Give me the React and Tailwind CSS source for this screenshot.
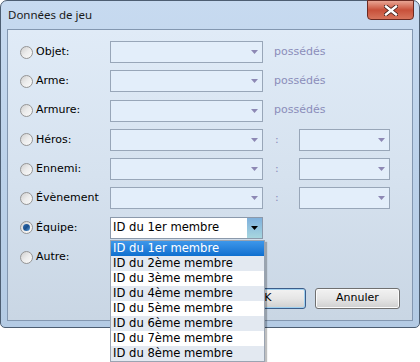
import React, { useState } from "react";

const rows = [
  { label: "Objet:", suffix: "possédés" },
  { label: "Arme:", suffix: "possédés" },
  { label: "Armure:", suffix: "possédés" },
  { label: "Héros:", second: true },
  { label: "Ennemi:", second: true },
  { label: "Évènement", second: true },
];

const members = [
  "ID du 1er membre",
  "ID du 2ème membre",
  "ID du 3ème membre",
  "ID du 4ème membre",
  "ID du 5ème membre",
  "ID du 6ème membre",
  "ID du 7ème membre",
  "ID du 8ème membre",
];

function Radio({ checked }) {
  return (
    <span className="w-[13px] h-[13px] rounded-full border border-[#959595] bg-gradient-to-br from-[#cfcfcf] via-[#ececec] to-[#fafafa] flex items-center justify-center shrink-0">
      {checked && (
        <span className="w-[7px] h-[7px] rounded-full bg-gradient-to-br from-[#2e6fb4] via-[#1b4f8c] to-[#5aa0dc]"></span>
      )}
    </span>
  );
}

function DisabledCombo({ width }) {
  return (
    <div
      className={`${width} h-[22px] border border-[#98a6b8] bg-[#e3eefa] flex items-center justify-end pr-[4px]`}
    >
      <svg width="7" height="4" viewBox="0 0 7 4">
        <path d="M0 0h7L3.5 4z" fill="#8d88b4" />
      </svg>
    </div>
  );
}

export default function App() {
  const [selected, setSelected] = useState(0);

  return (
    <div className="w-[420px] h-[362px] bg-white font-['DejaVu_Sans',sans-serif] text-[11px] text-black">
      {/* Window */}
      <div className="relative h-[328px] rounded-t-[7px] rounded-b-[5px] border border-[#4d5e72] bg-gradient-to-b from-[#c7daf0] via-[#bcd2ea] to-[#b4cbe4] px-[6px] pb-[6px] flex flex-col">
        {/* Title bar */}
        <div className="h-[28px] flex justify-between">
          <span className="pl-[1px] pt-[5px] font-['Noto_Sans',sans-serif] text-[11.5px] text-[#1a1a1a]">
            Données de jeu
          </span>
          <button className="-mt-px -mr-px w-[47px] h-[20px] rounded-b-[4px] border border-[#6b2a22] bg-gradient-to-b from-[#e8a493] via-[#c8503a] to-[#d7745c] flex items-center justify-center">
            <svg width="14" height="11" viewBox="0 0 14 11">
              <path
                d="M2 1.5l10 8M12 1.5l-10 8"
                stroke="#3b1a16"
                strokeWidth="4"
                strokeLinecap="square"
              />
              <path
                d="M2 1.5l10 8M12 1.5l-10 8"
                stroke="#ffffff"
                strokeWidth="2.4"
                strokeLinecap="square"
              />
            </svg>
          </button>
        </div>

        {/* Client area */}
        <div className="relative flex-1 border border-[#8397b0] bg-gradient-to-b from-[#e0ebf7] via-[#d6e2ef] to-[#c9d6e4] pt-[11px] pl-[12px] pr-[12px] flex flex-col">
          <div className="flex flex-col gap-[7.3px]">
            {rows.map((row) => (
              <div key={row.label} className="h-[22px] flex items-center">
                <div className="w-[90px] flex items-center gap-[3px]">
                  <Radio />
                  <span>{row.label}</span>
                </div>
                <DisabledCombo width="w-[153px]" />
                {row.suffix && (
                  <span className="ml-[11px] text-[#8b8dba]">{row.suffix}</span>
                )}
                {row.second && (
                  <>
                    <span className="ml-[12px] w-[24px] text-[#8b8dba]">:</span>
                    <DisabledCombo width="w-[91px]" />
                  </>
                )}
              </div>
            ))}

            {/* Équipe */}
            <div className="h-[22px] flex items-center">
              <div className="w-[90px] flex items-center gap-[3px]">
                <Radio checked />
                <span>Équipe:</span>
              </div>
              <div className="relative">
                <div className="w-[153px] h-[22px] border border-[#8b99ab] bg-white flex items-center text-[11.6px]">
                  <span className="flex-1 pl-[2px]">{members[selected]}</span>
                  <span className="w-[15px] h-[20px] bg-gradient-to-b from-[#7fb0dc] to-[#a7d6df] flex items-center justify-center">
                    <svg width="7" height="4" viewBox="0 0 7 4">
                      <path d="M0 0h7L3.5 4z" fill="#000000" />
                    </svg>
                  </span>
                </div>
                {/* Dropdown list */}
                <ul className="absolute left-0 top-[23px] w-[155px] border border-[#9aa4b2] bg-white shadow-[2px_2px_1px_rgba(0,0,0,0.25)] z-10 text-[11.6px]">
                  {members.map((m, i) => (
                    <li
                      key={m}
                      onClick={() => setSelected(i)}
                      className={`h-[15px] leading-[15px] pl-[2px] ${
                        i === selected
                          ? "bg-gradient-to-b from-[#3d97ea] to-[#0d6fcf] text-white"
                          : i % 2 === 1
                          ? "bg-[#e3e9f1]"
                          : "bg-white"
                      }`}
                    >
                      {m}
                    </li>
                  ))}
                </ul>
              </div>
            </div>

            {/* Autre */}
            <div className="h-[22px] flex items-center">
              <div className="w-[90px] flex items-center gap-[3px]">
                <Radio />
                <span>Autre:</span>
              </div>
            </div>
          </div>

          {/* Buttons */}
          <div className="mt-auto mb-[11px] flex justify-end gap-[9px]">
            <button className="w-[85px] h-[21px] rounded-[3px] border border-[#3c5d8a] bg-gradient-to-b from-[#f2f2f2] via-[#e6e6e6] to-[#cfcfcf] shadow-[inset_0_0_0_1px_#9fd0f0]">
              OK
            </button>
            <button className="w-[85px] h-[21px] rounded-[3px] border border-[#707070] bg-gradient-to-b from-[#f2f2f2] via-[#e6e6e6] to-[#cfcfcf] shadow-[inset_0_0_0_1px_#fbfbfb]">
              Annuler
            </button>
          </div>
        </div>
      </div>
    </div>
  );
}
